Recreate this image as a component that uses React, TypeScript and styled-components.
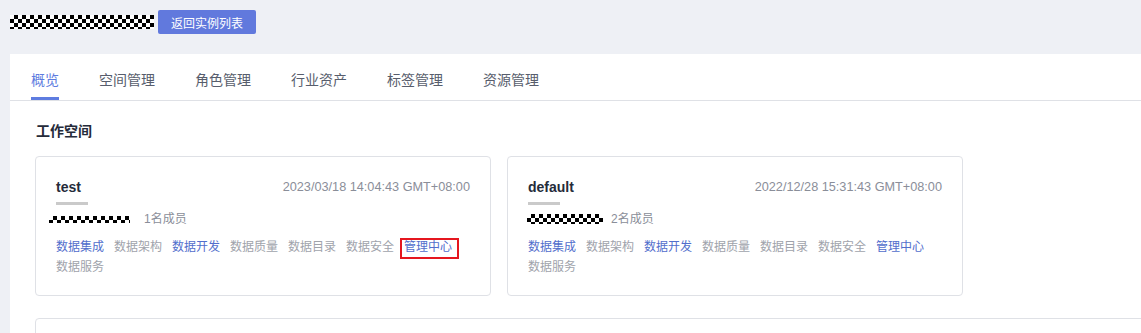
import styled, { createGlobalStyle, css } from "styled-components";

const GlobalStyle = createGlobalStyle`
	html, body {
		margin: 0;
		padding: 0;
		background: #eef0f5;
		font-family: "Liberation Sans", "Noto Sans CJK SC", sans-serif;
		overflow: hidden;
	}
`;

const checker = css`
	background-color: #fff;
	background-image: conic-gradient(
		#000 0 25%,
		#fff 0 50%,
		#000 0 75%,
		#fff 0
	);
	background-size: 8px 8px;
`;

const Page = styled.div`
	width: 1141px;
	height: 333px;
	overflow: hidden;
`;

const Header = styled.div`
	align-items: center;
	display: flex;
	gap: 4px;
	height: 24px;
	padding: 10px 0 20px 10px;
`;

const Redacted = styled.span<{ $w: number; $h: number; $shift?: number }>`
	${checker};
	display: inline-block;
	flex-shrink: 0;
	height: ${({ $h }) => $h}px;
	margin-left: ${({ $shift }) => $shift ?? 0}px;
	width: ${({ $w }) => $w}px;
`;

const BackButton = styled.button`
	background: #6179dd;
	border: none;
	border-radius: 2px;
	color: #fff;
	font-family: inherit;
	font-size: 12px;
	height: 24px;
	padding: 0;
	width: 98px;
`;

const Panel = styled.div`
	background: #fff;
	margin-left: 10px;
	min-height: 300px;
`;

const TabBar = styled.div`
	border-bottom: 1px solid #dfe1e6;
	display: flex;
	gap: 40px;
	padding: 16px 0 0 21px;
`;

const Tab = styled.div<{ $active?: boolean }>`
	border-bottom: 3px solid ${({ $active }) => ($active ? "#5e7ce0" : "transparent")};
	color: ${({ $active }) => ($active ? "#5e7ce0" : "#575d6c")};
	font-size: 14px;
	line-height: 20px;
	padding-bottom: 7px;
`;

const Section = styled.div`
	padding: 20px 0 0 25px;
`;

const SectionTitle = styled.h3`
	color: #252b3a;
	font-size: 14px;
	font-weight: bold;
	line-height: 20px;
	margin: 0 0 15px 1px;
`;

const CardRow = styled.div`
	display: flex;
	gap: 16px;
	margin-bottom: 22px;
`;

const Card = styled.div<{ $wide?: boolean }>`
	border: 1px solid #dfe1e6;
	border-radius: 4px;
	box-sizing: border-box;
	flex-shrink: 0;
	padding: 20px 20px 18px;
	width: ${({ $wide }) => ($wide ? "1200px" : "456px")};
	min-height: 140px;
`;

const CardHead = styled.div`
	align-items: center;
	display: flex;
	justify-content: space-between;
	line-height: 20px;
`;

const CardName = styled.span`
	color: #252b3a;
	font-size: 14px;
	font-weight: bold;
`;

const CardTime = styled.span`
	color: #8a8e99;
	font-size: 12.7px;
`;

const NameBar = styled.div`
	background: #cacaca;
	height: 3px;
	margin: 5px 0 4px;
	width: 32px;
`;

const Members = styled.div<{ $gap: number }>`
	align-items: center;
	color: #8a8e99;
	display: flex;
	font-size: 12px;
	gap: ${({ $gap }) => $gap}px;
	line-height: 20px;
`;

const Links = styled.div`
	display: flex;
	flex-wrap: wrap;
	column-gap: 10px;
	font-size: 12px;
	line-height: 20px;
	margin-top: 8px;
`;

const ServiceLink = styled.span<{ $enabled?: boolean; $marked?: boolean }>`
	color: ${({ $enabled }) => ($enabled ? "#526ecc" : "#a0a3ab")};
	position: relative;

	${({ $marked }) =>
		$marked &&
		css`
			&::after {
				border: 2px solid #e5171f;
				bottom: -2px;
				content: "";
				left: -4px;
				position: absolute;
				right: -7px;
				top: 1px;
			}
		`}
`;

interface Workspace {
	name: string;
	time: string;
	members: string;
	redactW: number;
	redactH: number;
	redactShift: number;
	gap: number;
	marked?: boolean;
}

const services: { label: string; enabled: boolean; key?: boolean }[] = [
	{ label: "数据集成", enabled: true },
	{ label: "数据架构", enabled: false },
	{ label: "数据开发", enabled: true },
	{ label: "数据质量", enabled: false },
	{ label: "数据目录", enabled: false },
	{ label: "数据安全", enabled: false },
	{ label: "管理中心", enabled: true, key: true },
	{ label: "数据服务", enabled: false },
];

const workspaces: Workspace[] = [
	{
		name: "test",
		time: "2023/03/18 14:04:43 GMT+08:00",
		members: "1名成员",
		redactW: 81,
		redactH: 7,
		redactShift: -7,
		gap: 14,
		marked: true,
	},
	{
		name: "default",
		time: "2022/12/28 15:31:43 GMT+08:00",
		members: "2名成员",
		redactW: 76,
		redactH: 10,
		redactShift: -1,
		gap: 8,
	},
];

function WorkspaceCard({ ws }: { ws: Workspace }) {
	return (
		<Card>
			<CardHead>
				<CardName>{ws.name}</CardName>
				<CardTime>{ws.time}</CardTime>
			</CardHead>
			<NameBar />
			<Members $gap={ws.gap}>
				<Redacted $w={ws.redactW} $h={ws.redactH} $shift={ws.redactShift} />
				<span>{ws.members}</span>
			</Members>
			<Links>
				{services.map((s) => (
					<ServiceLink
						key={s.label}
						$enabled={s.enabled}
						$marked={ws.marked && s.key}
					>
						{s.label}
					</ServiceLink>
				))}
			</Links>
		</Card>
	);
}

const tabs = ["概览", "空间管理", "角色管理", "行业资产", "标签管理", "资源管理"];

export default function App() {
	return (
		<Page>
			<GlobalStyle />
			<Header>
				<Redacted $w={144} $h={14} />
				<BackButton>返回实例列表</BackButton>
			</Header>
			<Panel>
				<TabBar>
					{tabs.map((t, i) => (
						<Tab key={t} $active={i === 0}>
							{t}
						</Tab>
					))}
				</TabBar>
				<Section>
					<SectionTitle>工作空间</SectionTitle>
					<CardRow>
						{workspaces.map((ws) => (
							<WorkspaceCard key={ws.name} ws={ws} />
						))}
					</CardRow>
					<Card $wide />
				</Section>
			</Panel>
		</Page>
	);
}
